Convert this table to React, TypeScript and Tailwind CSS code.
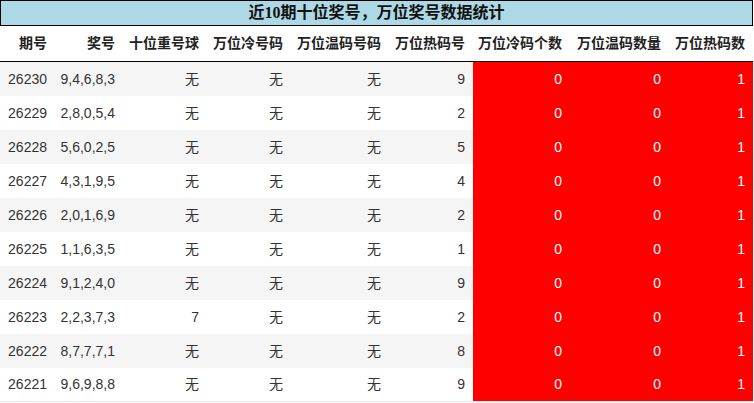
import React from "react";

const rows: [string, string, string, string, string, string, string, string, string][] = [
  ["26230", "9,4,6,8,3", "无", "无", "无", "9", "0", "0", "1"],
  ["26229", "2,8,0,5,4", "无", "无", "无", "2", "0", "0", "1"],
  ["26228", "5,6,0,2,5", "无", "无", "无", "5", "0", "0", "1"],
  ["26227", "4,3,1,9,5", "无", "无", "无", "4", "0", "0", "1"],
  ["26226", "2,0,1,6,9", "无", "无", "无", "2", "0", "0", "1"],
  ["26225", "1,1,6,3,5", "无", "无", "无", "1", "0", "0", "1"],
  ["26224", "9,1,2,4,0", "无", "无", "无", "9", "0", "0", "1"],
  ["26223", "2,2,3,7,3", "7", "无", "无", "2", "0", "0", "1"],
  ["26222", "8,7,7,7,1", "无", "无", "无", "8", "0", "0", "1"],
  ["26221", "9,6,9,8,8", "无", "无", "无", "9", "0", "0", "1"],
];

const headers = [
  "期号",
  "奖号",
  "十位重号球",
  "万位冷号码",
  "万位温码号码",
  "万位热码号",
  "万位冷码个数",
  "万位温码数量",
  "万位热码数",
];

const grid = "grid grid-cols-[55px_68px_84px_84px_98px_84px_97px_99px_84px]";

export default function App() {
  return (
    <div
      className="w-[753px] bg-white"
      style={{ fontFamily: '"Liberation Sans", "Noto Sans CJK SC", sans-serif' }}
    >
      <div
        className="h-[26px] border border-black bg-[#add8e6] flex items-center justify-center text-[16px] font-bold text-[#111]"
        style={{ fontFamily: '"Liberation Serif", "Noto Sans CJK SC", serif' }}
      >
        近10期十位奖号，万位奖号数据统计
      </div>
      <div className={`${grid} h-[36px] border-b border-black`}>
        {headers.map((h) => (
          <div
            key={h}
            className="flex items-center justify-end pr-2 text-[14px] font-bold text-[#222] whitespace-nowrap"
          >
            {h}
          </div>
        ))}
      </div>
      {rows.map((r, i) => (
        <div
          key={r[0]}
          className={`${grid} h-[34px] ${i % 2 === 0 ? "bg-[#f5f5f5]" : "bg-white"} ${
            i === rows.length - 1 ? "border-b border-[#e8e8e8]" : ""
          }`}
        >
          {r.map((c, j) => (
            <div
              key={j}
              className={`flex items-center justify-end pr-2 text-[14px] whitespace-nowrap ${
                j >= 6 ? "bg-[#ff0000] text-white" : "text-[#333]"
              }`}
            >
              {c}
            </div>
          ))}
        </div>
      ))}
    </div>
  );
}
